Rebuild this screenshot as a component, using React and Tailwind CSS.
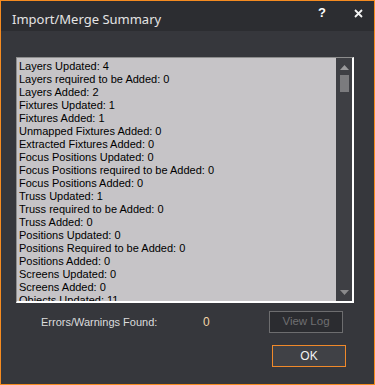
import React from "react";

const lines = [
  "Layers Updated: 4",
  "Layers required to be Added: 0",
  "Layers Added: 2",
  "Fixtures Updated: 1",
  "Fixtures Added: 1",
  "Unmapped Fixtures Added: 0",
  "Extracted Fixtures Added: 0",
  "Focus Positions Updated: 0",
  "Focus Positions required to be Added: 0",
  "Focus Positions Added: 0",
  "Truss Updated: 1",
  "Truss required to be Added: 0",
  "Truss Added: 0",
  "Positions Updated: 0",
  "Positions Required to be Added: 0",
  "Positions Added: 0",
  "Screens Updated: 0",
  "Screens Added: 0",
  "Objects Updated: 11",
];

function App() {
  return (
    <div className="w-[375px] h-[385px] border border-[#f58b20] bg-[#36373c] flex flex-col font-['Liberation_Sans',sans-serif]">
      <div className="h-[30px] shrink-0 bg-[#2c2d31] flex items-start justify-between">
        <span className="pl-[11px] pt-[11px] text-[13px] leading-[14px] text-[#e4e4e4] font-['Noto_Sans',sans-serif]">
          Import/Merge Summary
        </span>
        <div className="flex items-center pt-[4px] gap-[28px] pr-[11px]">
          <span className="text-[13px] font-bold text-white leading-[16px]">?</span>
          <svg width="9" height="9" viewBox="0 0 9 9" className="mt-[1px]">
            <path d="M1 1L8 8M8 1L1 8" stroke="#f4f4f4" strokeWidth="1.8" />
          </svg>
        </div>
      </div>

      <div className="mt-[26px] ml-[15px] w-[338px] h-[246px] flex border-t border-l border-[#8d8d8d] border-r-2 border-b-2 border-r-white border-b-white">
        <div className="flex-1 bg-[#c6c4c7] overflow-hidden pl-[2px] pt-[2px] text-[11px] leading-[13px] text-black">
          {lines.map((l) => (
            <div key={l} className="whitespace-nowrap">{l}</div>
          ))}
        </div>
        <div className="w-[16px] bg-[#3e3f44] flex flex-col items-center justify-between pt-[7px] pb-[6px]">
          <div className="flex flex-col items-center gap-[5px]">
            <svg width="9" height="5" viewBox="0 0 9 5">
              <path d="M4.5 0L9 5H0Z" fill="#9a9a9c" />
            </svg>
            <div className="w-[9px] h-[17px] bg-[#7b7b7e]" />
          </div>
          <svg width="9" height="5" viewBox="0 0 9 5">
            <path d="M0 0H9L4.5 5Z" fill="#8a8a8c" />
          </svg>
        </div>
      </div>

      <div className="mt-[8px] flex items-center">
        <span className="ml-[40px] w-[162px] text-[11px] text-[#dcdcdc]">Errors/Warnings Found:</span>
        <span className="w-[66px] text-[12px] text-[#f3d6a8]">0</span>
        <button className="w-[74px] h-[22px] border border-[#6d6d6f] bg-[#2b2c30] text-[11.5px] text-[#6f6f71]">
          View Log
        </button>
      </div>

      <div className="mt-[12px] flex justify-end pr-[28px]">
        <button className="w-[74px] h-[22px] border border-[#f0892a] bg-[#404146] text-[12px] text-[#f2f2f2]">
          OK
        </button>
      </div>
    </div>
  );
}

export default App;
